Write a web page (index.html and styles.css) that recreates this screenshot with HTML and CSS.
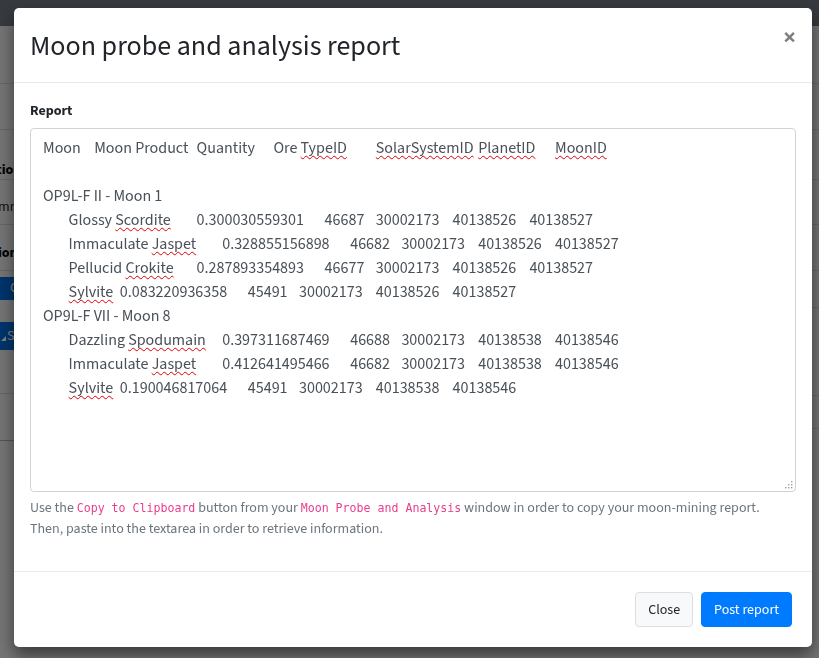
FILE: index.html
```html
<!DOCTYPE html>
<html lang="en">
<head>
<meta charset="utf-8">
<title>Moon probe and analysis report</title>
<link rel="stylesheet" href="styles.css">
</head>
<body>
<div class="page">
  <div class="topbar"></div>
  <div class="page-body">
    <div class="side side-left">
      <div class="row h57"></div>
      <div class="row h46"></div>
      <div class="row h50 label-row"><b class="cut-loc">Location</b></div>
      <div class="row h45 text-row"><span class="cut-sum">Summary</span></div>
      <div class="row h46 label-row2"><b class="cut-sta">Station <span class="tag">I</span></b></div>
      <div class="row h123 btn-row">
        <span class="bg-btn bg-btn-sm">Copy</span>
        <span class="bg-btn bg-btn-md"><svg class="bg-icon" viewBox="0 0 6 6" width="5" height="5"><path d="M0 6 L6 0 L6 6 Z" fill="#fff"/></svg>Save</span>
      </div>
      <div class="row h47"></div>
    </div>
    <div class="side side-right">
      <div class="row h57"></div>
      <div class="row h46"></div>
      <div class="row h50"></div>
      <div class="row h45"></div>
      <div class="row h46"></div>
      <div class="row h37"></div>
      <div class="row h88"></div>
      <div class="row h33 right-label"><b>s</b></div>
    </div>
  </div>
</div>

<div class="backdrop"></div>

<div class="modal" role="dialog" aria-labelledby="modal-title">
  <div class="modal-header">
    <h4 class="modal-title" id="modal-title">Moon probe and analysis report</h4>
    <button type="button" class="close" aria-label="Close"><span aria-hidden="true">&times;</span></button>
  </div>
  <div class="modal-body">
    <div class="form-group">
      <label class="form-label">Report</label>
      <div class="input-wrap">
      <div class="report-input" role="textbox" aria-multiline="true">Moon&#9;Moon Product&#9;Quantity&#9;Ore <span class="sp">TypeID</span>&#9;&#9;<span class="sp">SolarSystemID</span>&#9;<span class="sp">PlanetID</span>&#9;<span class="sp">MoonID</span>

OP9L-F II - Moon 1
&#9;Glossy <span class="sp">Scordite</span>&#9;0.300030559301&#9;46687&#9;30002173&#9;40138526&#9;40138527
&#9;Immaculate <span class="sp">Jaspet</span>&#9;0.328855156898&#9;46682&#9;30002173&#9;40138526&#9;40138527
&#9;Pellucid <span class="sp">Crokite</span>&#9;0.287893354893&#9;46677&#9;30002173&#9;40138526&#9;40138527
&#9;<span class="sp">Sylvite</span>&#9;0.083220936358&#9;45491&#9;30002173&#9;40138526&#9;40138527
OP9L-F VII - Moon 8
&#9;Dazzling <span class="sp">Spodumain</span>&#9;0.397311687469&#9;46688&#9;30002173&#9;40138538&#9;40138546
&#9;Immaculate <span class="sp">Jaspet</span>&#9;0.412641495466&#9;46682&#9;30002173&#9;40138538&#9;40138546
&#9;<span class="sp">Sylvite</span>&#9;0.190046817064&#9;45491&#9;30002173&#9;40138538&#9;40138546</div>
      <svg class="grip" viewBox="0 0 9 9" width="9" height="9" aria-hidden="true">
        <rect x="7" y="1" width="1.4" height="1.4" fill="#a0a0a0"/>
        <rect x="4" y="4" width="1.4" height="1.4" fill="#a0a0a0"/>
        <rect x="7" y="4" width="1.4" height="1.4" fill="#a0a0a0"/>
        <rect x="1" y="7" width="1.4" height="1.4" fill="#a0a0a0"/>
        <rect x="4" y="7" width="1.4" height="1.4" fill="#a0a0a0"/>
        <rect x="7" y="7" width="1.4" height="1.4" fill="#a0a0a0"/>
      </svg>
      </div>
      <small class="form-text">Use the <code>Copy to Clipboard</code> button from your <code>Moon Probe and Analysis</code> window in order to copy your moon-mining report.<br>Then, paste into the textarea in order to retrieve information.</small>
    </div>
  </div>
  <div class="modal-footer">
    <button type="button" class="btn btn-light">Close</button>
    <button type="button" class="btn btn-primary">Post report</button>
  </div>
</div>
</body>
</html>
```
FILE: styles.css
```css
* { box-sizing: border-box; }

html, body { height: 100%; }

body {
  margin: 0;
  font-family: "Source Sans 3", "Source Sans Pro", "Lato", sans-serif;
  font-size: 14px;
  line-height: 1.5;
  color: #212529;
  background: #e8e8e8;
  overflow: hidden;
}

/* ---------- page behind the modal ---------- */
.page { height: 100%; display: flex; flex-direction: column; }
.topbar { height: 26px; background: #6c757d; flex: none; }
.page-body { flex: 1; display: flex; justify-content: space-between; background: #e8e8e8; }
.side { display: flex; flex-direction: column; }
.side-left { width: 120px; overflow: hidden; }
.side-right { width: 60px; overflow: hidden; }
.row { border-bottom: 1px solid #cdcdcd; flex: none; white-space: nowrap; }
.h57 { height: 58px; }
.h46 { height: 46px; }
.h50 { height: 50px; }
.h45 { height: 45px; }
.h123 { height: 123px; }
.h47 { height: 47px; border-bottom-color: #a9a9a9; }
.h37 { height: 37px; }
.h88 { height: 88px; }
.h33 { height: 33px; }
.label-row { padding-top: 30px; }
.text-row { padding-top: 17px; }
.label-row2 { padding-top: 18px; }
.cut-loc { display: block; text-indent: -32px; color: #000; }
.cut-sum { display: block; text-indent: -17px; color: #222; }
.cut-sta { display: block; text-indent: -27px; color: #000; }
.tag { color: #c77a1a; }
.btn-row { display: flex; flex-direction: column; align-items: flex-start; padding-top: 6px; gap: 22px; }
.bg-btn { display: flex; align-items: center; background: #0069d9; color: #fff; width: 80px; }
.bg-btn-sm { height: 23px; padding-left: 10px; }
.bg-btn-md { height: 28px; padding-left: 1px; gap: 1px; }
.bg-icon { flex: none; margin-top: 4px; }
.right-label { padding-top: 8px; padding-left: 1px; color: #000; }

.backdrop {
  position: fixed;
  inset: 0;
  background: rgba(0, 0, 0, 0.5);
}

/* ---------- modal ---------- */
.modal {
  position: fixed;
  top: 8px;
  left: 14px;
  width: 798px;
  background: #fff;
  border-radius: 5px;
  box-shadow: 0 0.5rem 1rem rgba(0, 0, 0, 0.5);
  display: flex;
  flex-direction: column;
}

.modal-header {
  display: flex;
  align-items: flex-start;
  padding: 17px 16px 15px;
  border-bottom: 1px solid #e9ecef;
}

.modal-title {
  margin: 0;
  font-size: 28px;
  font-weight: 400;
  line-height: 42px;
  color: #212529;
}

.close {
  margin: -17px -16px -15px auto;
  padding: 18px 16px 14px;
  border: 0;
  background: transparent;
  font-family: inherit;
  font-size: 24px;
  font-weight: 700;
  line-height: 1;
  color: #000;
  opacity: 0.5;
  cursor: pointer;
}

.modal-body { padding: 16px; }

.form-group { margin-bottom: 15px; }

.form-label {
  display: inline-block;
  padding-top: 2px;
  margin-bottom: 6px;
  font-weight: 700;
}

.input-wrap { position: relative; }

.report-input {
  display: block;
  width: 100%;
  height: 364px;
  padding: 7px 12px 5px;
  font-size: 16px;
  line-height: 24px;
  color: #495057;
  background: #fff;
  border: 1px solid #ced4da;
  border-radius: 4px;
  white-space: pre;
  tab-size: 8;
  overflow: hidden;
}

.grip {
  position: absolute;
  right: 3px;
  bottom: 3px;
}

.sp {
  text-decoration: underline wavy #e00000;
  text-decoration-thickness: 1px;
  text-underline-offset: 2px;
  text-decoration-skip-ink: none;
}

.form-text {
  display: block;
  margin-top: 6px;
  font-size: 14px;
  color: #6c757d;
}

code {
  font-family: "DejaVu Sans Mono", "Liberation Mono", monospace;
  font-size: 11.6px;
  color: #e83e8c;
}

.modal-footer {
  display: flex;
  justify-content: flex-end;
  align-items: center;
  padding: 16px;
  border-top: 1px solid #e9ecef;
}

.btn {
  margin: 4px;
  padding: 7px 12px 5px;
  font-family: inherit;
  font-size: 14px;
  line-height: 21px;
  border: 1px solid transparent;
  border-radius: 4px;
  cursor: pointer;
}

.btn-light { background: #f8f9fa; border-color: #dcdfe2; color: #212529; }
.btn-primary { background: #007bff; border-color: #007bff; color: #fff; }
```
